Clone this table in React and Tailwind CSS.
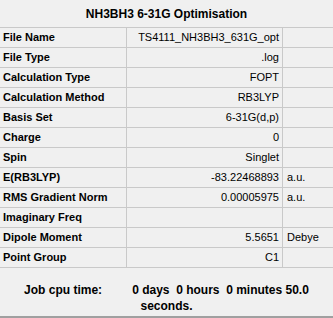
import React from "react";

const rows = [
  { label: "File Name", value: "TS4111_NH3BH3_631G_opt", unit: "" },
  { label: "File Type", value: ".log", unit: "" },
  { label: "Calculation Type", value: "FOPT", unit: "" },
  { label: "Calculation Method", value: "RB3LYP", unit: "" },
  { label: "Basis Set", value: "6-31G(d,p)", unit: "" },
  { label: "Charge", value: "0", unit: "" },
  { label: "Spin", value: "Singlet", unit: "" },
  { label: "E(RB3LYP)", value: "-83.22468893", unit: "a.u." },
  { label: "RMS Gradient Norm", value: "0.00005975", unit: "a.u." },
  { label: "Imaginary Freq", value: "", unit: "" },
  { label: "Dipole Moment", value: "5.5651", unit: "Debye" },
  { label: "Point Group", value: "C1", unit: "" },
];

function SummaryRow({ label, value, unit }) {
  return (
    <div className="flex h-[20px] border-b border-[#c9c9c9] text-[11px] leading-[19px]">
      <div className="w-[127px] shrink-0 border-r border-[#c9c9c9] pl-[3px] font-bold">
        {label}
      </div>
      <div className="w-[156px] shrink-0 border-r border-[#c9c9c9] pr-[3px] text-right">
        {value}
      </div>
      <div className="flex-1 pl-[4px]">{unit}</div>
    </div>
  );
}

export default function App() {
  return (
    <div
      className="flex h-[318px] w-[333px] flex-col bg-[#f0f0f0] text-black"
      style={{ fontFamily: '"Liberation Sans", Arial, sans-serif' }}
    >
      <div className="flex h-[28px] items-center justify-center border-b border-[#c9c9c9] text-[12px] font-bold">
        NH3BH3 6-31G Optimisation
      </div>
      {rows.map((r) => (
        <SummaryRow key={r.label} {...r} />
      ))}
      <div className="flex flex-1 flex-col items-center pt-[14px] text-[12px] font-bold leading-[16px]">
        <div className="flex gap-[30px] whitespace-pre">
          <span>Job cpu time:</span>
          <span>0 days  0 hours  0 minutes 50.0</span>
        </div>
        <div>seconds.</div>
      </div>
      <div className="h-[2px] bg-[#a0a0a0]" />
    </div>
  );
}
